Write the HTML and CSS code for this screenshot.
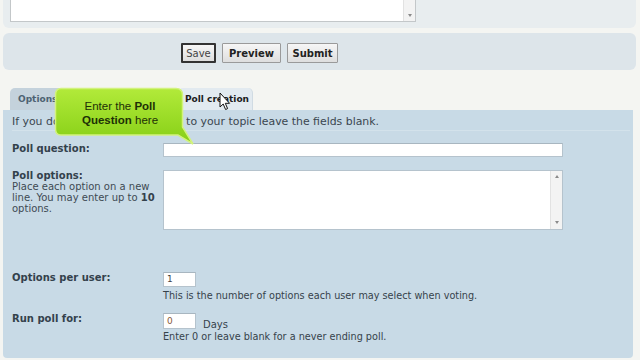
FILE: index.html
```html
<!DOCTYPE html>
<html>
<head>
<meta charset="utf-8">
<link rel="stylesheet" href="styles.css">
</head>
<body>
<div class="page">
  <div class="top-panel">
    <div class="fake-textarea">
      <div class="ta-body"></div>
      <div class="ta-scroll"><span class="arrow-down"></span></div>
    </div>
  </div>

  <div class="button-bar">
    <button class="btn btn-save">Save</button>
    <button class="btn btn-bold btn-preview">Preview</button>
    <button class="btn btn-bold btn-submit">Submit</button>
  </div>

  <div class="tabs">
    <div class="tab tab-inactive tab-options">Options</div>
    <div class="tab tab-inactive tab-hidden"></div>
    <div class="tab tab-active">Poll creation</div>
  </div>

  <div class="panel">
    <p class="intro">If you do not want to add a poll to your topic leave the fields blank.</p>

    <div class="row row-question">
      <div class="label"><b>Poll question:</b></div>
      <div class="field"><div class="input input-wide"></div></div>
    </div>

    <div class="row row-options">
      <div class="label">
        <b>Poll options:</b><br>
        Place each option on a new line. You may enter up to <b>10</b> options.
      </div>
      <div class="field">
        <div class="fake-textarea big">
          <div class="ta-body"></div>
          <div class="ta-scroll"><span class="arrow-up"></span><span class="arrow-down"></span></div>
        </div>
      </div>
    </div>

    <div class="row row-per-user">
      <div class="label"><b>Options per user:</b></div>
      <div class="field">
        <div class="input input-small">1</div>
        <div class="explain">This is the number of options each user may select when voting.</div>
      </div>
    </div>

    <div class="row row-run">
      <div class="label"><b>Run poll for:</b></div>
      <div class="field">
        <div class="inline"><div class="input input-small input-run">0</div><span class="days">Days</span></div>
        <div class="explain explain-run">Enter 0 or leave blank for a never ending poll.</div>
      </div>
    </div>
  </div>

  <div class="callout">
    <svg class="callout-shape" width="150" height="64" viewBox="0 0 150 64">
      <defs>
        <linearGradient id="g" x1="0" y1="0" x2="0" y2="1">
          <stop offset="0" stop-color="#b2ea3a"/>
          <stop offset="1" stop-color="#86cf16"/>
        </linearGradient>
      </defs>
      <path d="M7 1.5 H122 Q128.5 1.5 128.5 8 V40 L139 57 L124 48 H7 Q1.5 48 1.5 42 V8 Q1.5 1.5 7 1.5 Z" fill="url(#g)" stroke="#d2f27e" stroke-width="1.5"/>
    </svg>
    <div class="callout-text">Enter the <b>Poll</b><br><b>Question</b> here</div>
  </div>

  <svg class="cursor" width="12" height="19" viewBox="0 0 12 19">
    <path d="M1 1 V15 L4.2 12 L6.6 17.5 L8.6 16.6 L6.3 11.3 H10.6 Z" fill="#fff" stroke="#111" stroke-width="1" stroke-linejoin="round"/>
  </svg>
</div>
</body>
</html>
```

FILE: styles.css
```css
html, body {
  margin: 0;
  padding: 0;
}
body {
  background: #f4f5f2;
  font-family: "DejaVu Sans", Verdana, sans-serif;
  font-size: 10px;
  color: #36424b;
  width: 640px;
  height: 360px;
  overflow: hidden;
}
.page {
  position: relative;
  width: 640px;
  height: 360px;
}

/* top panel with message textarea */
.top-panel {
  margin: 0 4px 0 3px;
  height: 28px;
  background: #e8edef;
  border-radius: 0 0 6px 6px;
  padding-left: 7px;
}
.fake-textarea {
  display: flex;
  width: 406px;
  height: 22px;
  box-sizing: border-box;
  border: 1px solid #c3c7c9;
  border-top: none;
  background: #fff;
}
.ta-body {
  flex: 1;
}
.ta-scroll {
  width: 12px;
  border-left: 1px solid #e2e2e2;
  background: #f3f3f3;
  display: flex;
  flex-direction: column;
  justify-content: space-between;
  align-items: center;
  padding: 4px 0;
  box-sizing: border-box;
}
.top-panel .ta-scroll {
  justify-content: flex-end;
}
.arrow-down, .arrow-up {
  width: 0;
  height: 0;
  border-left: 2.5px solid transparent;
  border-right: 2.5px solid transparent;
}
.arrow-down {
  border-top: 3px solid #8a8a8a;
}
.arrow-up {
  border-bottom: 3px solid #8a8a8a;
}

/* button bar */
.button-bar {
  margin: 5px 4px 0 3px;
  height: 37px;
  box-sizing: border-box;
  background: #dde5ea;
  border-radius: 6px;
  padding: 10px 0 0 178px;
  display: flex;
  gap: 6px;
  align-items: flex-start;
}
.btn {
  height: 20px;
  box-sizing: border-box;
  padding: 0;
  font-family: "DejaVu Sans", Verdana, sans-serif;
  font-size: 10px;
  color: #222;
  background: linear-gradient(#f6f6f6, #dedede);
  border: 1px solid #9a9a9a;
  border-radius: 1px;
}
.btn-save {
  width: 35px;
  border: 2px solid #333;
  color: #444;
}
.btn-bold {
  font-weight: bold;
}
.btn-preview {
  width: 59px;
}
.btn-submit {
  width: 51px;
}

/* tabs */
.tabs {
  display: flex;
  margin-top: 18px;
  padding-left: 10px;
  height: 22px;
  gap: 2px;
}
.tab {
  height: 22px;
  box-sizing: border-box;
  border-radius: 5px 5px 0 0;
  font-weight: bold;
  font-size: 9px;
  line-height: 22px;
  padding: 0 8px;
  white-space: nowrap;
}
.tab-inactive {
  background: #c4d2dc;
  color: #4d6272;
}
.tab-options {
  width: 60px;
}
.tab-hidden {
  width: 104px;
}
.tab-active {
  background: #e2eaf0;
  color: #1c1c1c;
  width: 75px;
  padding: 0 0 0 7px;
  border-right: 1px solid #d0dbe3;
}

/* main panel */
.panel {
  margin: 0 7px 0 3px;
  background: #c8dae6;
  padding: 6px 0 15px 9px;
  border-radius: 0 0 4px 4px;
}
.intro {
  margin: 0;
  font-size: 10.9px;
  line-height: 12px;
  color: #3a464f;
  padding-bottom: 2px;
  border-bottom: 1px solid #d3e2eb;
  margin-right: 3px;
}
.row {
  display: grid;
  grid-template-columns: 151px 400px;
  line-height: 11px;
}
.label {
  color: #3e4a53;
}
.label b {
  color: #33414c;
}
.row-question {
  margin-top: 12px;
}
.row-options {
  margin-top: 13px;
}
.row-per-user {
  margin-top: 42px;
}
.row-run {
  margin-top: 11px;
}
.input {
  background: #fff;
  box-sizing: border-box;
  border: 1px solid #b5c3cd;
  border-top-color: #a8b6c0;
}
.input-wide {
  width: 400px;
  height: 14px;
}
.fake-textarea.big {
  width: 400px;
  height: 60px;
  border: 1px solid #b5c3cd;
}
.fake-textarea.big .ta-scroll {
  padding: 4px 0 5px;
}
.input-small {
  width: 33px;
  height: 15px;
  font-size: 9px;
  line-height: 13px;
  padding-left: 3px;
  color: #444;
}
.input-run {
  height: 16px;
  line-height: 14px;
  color: #8a5a3a;
}
.explain {
  margin-top: 3px;
  line-height: 12px;
  font-size: 9.7px;
}
.explain-run {
  margin-top: 2px;
}
.inline {
  display: flex;
  align-items: flex-end;
}
.days {
  margin-left: 7px;
  line-height: 11px;
  margin-bottom: -1px;
}

/* callout overlay */
.callout {
  position: absolute;
  left: 54px;
  top: 87px;
  width: 150px;
  height: 64px;
}
.callout-shape {
  position: absolute;
  left: 0;
  top: 0;
}
.callout-text {
  position: absolute;
  left: 2px;
  top: 12px;
  width: 128px;
  text-align: center;
  font-family: "Liberation Sans", Arial, sans-serif;
  font-size: 11.5px;
  line-height: 14px;
  color: #1d3006;
}

.cursor {
  position: absolute;
  left: 219px;
  top: 92px;
}
```
